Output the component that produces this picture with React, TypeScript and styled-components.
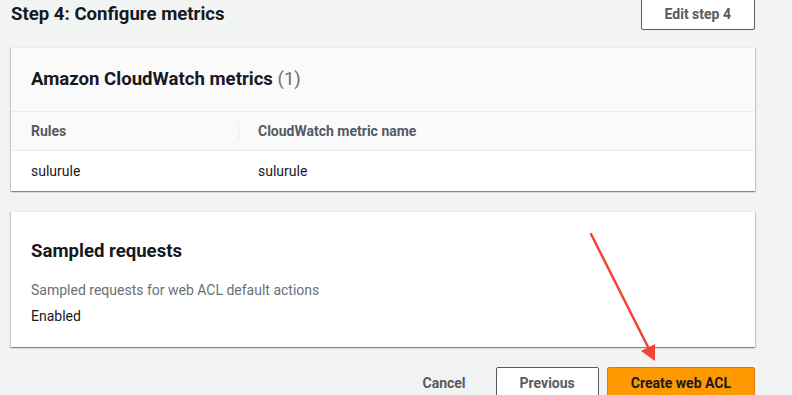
import React from 'react';
import styled, { createGlobalStyle } from 'styled-components';

const Global = createGlobalStyle`
  body {
    margin: 0;
    background: #f2f3f3;
    font-family: Roboto, "Open Sans", Arial, sans-serif;
    color: #16191f;
  }
`;

const Page = styled.div`
  position: relative;
  width: 792px;
  height: 395px;
  overflow: hidden;
  padding: 0 37px 0 11px;
  box-sizing: border-box;
`;

const StepHead = styled.div`
  display: flex;
  align-items: center;
  justify-content: space-between;
  height: 32px;
  margin-top: -2px;
`;

const StepTitle = styled.h2`
  margin: 0;
  font-size: 18.6px;
  font-weight: 700;
  line-height: 22px;
`;

const Btn = styled.button<{ $primary?: boolean }>`
  height: 32px;
  box-sizing: border-box;
  padding: 0 23px;
  font-family: inherit;
  font-size: 14px;
  font-weight: 700;
  border-radius: 2px;
  border: 1px solid ${p => (p.$primary ? '#ec7211' : '#545b64')};
  background: ${p => (p.$primary ? '#ff9900' : '#fff')};
  color: ${p => (p.$primary ? '#16191f' : '#545b64')};
`;

const LinkBtn = styled.button`
  height: 32px;
  padding: 0 22px;
  border: none;
  background: none;
  font-family: inherit;
  font-size: 14px;
  font-weight: 700;
  color: #545b64;
`;

const Panel = styled.div`
  background: #fff;
  border-top: 1px solid #eaeded;
  box-shadow: 0 1px 1px 0 rgba(0, 28, 36, 0.3), 1px 1px 1px 0 rgba(0, 28, 36, 0.15),
    -1px 1px 1px 0 rgba(0, 28, 36, 0.15);
`;

const PanelHead = styled.div<{ $grey?: boolean }>`
  background: ${p => (p.$grey ? '#fafafa' : '#fff')};
  border-bottom: ${p => (p.$grey ? '1px solid #eaeded' : 'none')};
  padding: ${p => (p.$grey ? '20px 20px 21px' : '28px 20px 0')};
`;

const PanelTitle = styled.h3`
  margin: 0;
  font-size: 18.6px;
  line-height: 22px;
  font-weight: 700;
`;

const Count = styled.span`
  font-weight: 400;
  color: #687078;
`;

const Table = styled.div`
  display: grid;
  grid-template-columns: 227px 1fr;
`;

const Th = styled.div`
  position: relative;
  background: #fafafa;
  border-bottom: 1px solid #eaeded;
  height: 38px;
  display: flex;
  align-items: center;
  padding-left: 20px;
  font-size: 14px;
  font-weight: 700;
  color: #545b64;
`;

const ThDivider = styled.span`
  position: absolute;
  left: 0;
  top: 10px;
  bottom: 10px;
  width: 1px;
  background: #eaeded;
`;

const Td = styled.div`
  height: 40px;
  display: flex;
  align-items: center;
  padding-left: 20px;
  font-size: 14px;
`;

const Body = styled.div`
  padding: 17px 20px 20px;
`;

const Label = styled.div`
  font-size: 14px;
  line-height: 22px;
  color: #687078;
  margin-bottom: 4px;
`;

const Value = styled.div`
  font-size: 14px;
  line-height: 22px;
`;

const Stack = styled.div`
  display: flex;
  flex-direction: column;
  gap: 20px;
  margin-top: 17px;
`;

const Footer = styled.div`
  display: flex;
  justify-content: flex-end;
  align-items: center;
  gap: 8px;
`;

const Arrow = styled.svg`
  position: absolute;
  left: 0;
  top: 0;
  pointer-events: none;
`;

export default function App() {
  return (
    <Page>
      <Global />
      <StepHead>
        <StepTitle>Step 4: Configure metrics</StepTitle>
        <Btn>Edit step 4</Btn>
      </StepHead>
      <Stack>
        <Panel>
          <PanelHead $grey>
            <PanelTitle>
              Amazon CloudWatch metrics <Count>(1)</Count>
            </PanelTitle>
          </PanelHead>
          <Table>
            <Th>Rules</Th>
            <Th>
              <ThDivider />
              CloudWatch metric name
            </Th>
            <Td>sulurule</Td>
            <Td>sulurule</Td>
          </Table>
        </Panel>
        <Panel>
          <PanelHead>
            <PanelTitle>Sampled requests</PanelTitle>
          </PanelHead>
          <Body>
            <Label>Sampled requests for web ACL default actions</Label>
            <Value>Enabled</Value>
          </Body>
        </Panel>
        <Footer>
          <LinkBtn>Cancel</LinkBtn>
          <Btn>Previous</Btn>
          <Btn $primary>Create web ACL</Btn>
        </Footer>
      </Stack>
      <Arrow width="792" height="395" viewBox="0 0 792 395">
        <line x1="591" y1="234" x2="649" y2="349" stroke="#ef4437" strokeWidth="2.5" strokeLinecap="round" />
        <polygon points="655,361 641,351 655,344" fill="#ef4437" />
      </Arrow>
    </Page>
  );
}
